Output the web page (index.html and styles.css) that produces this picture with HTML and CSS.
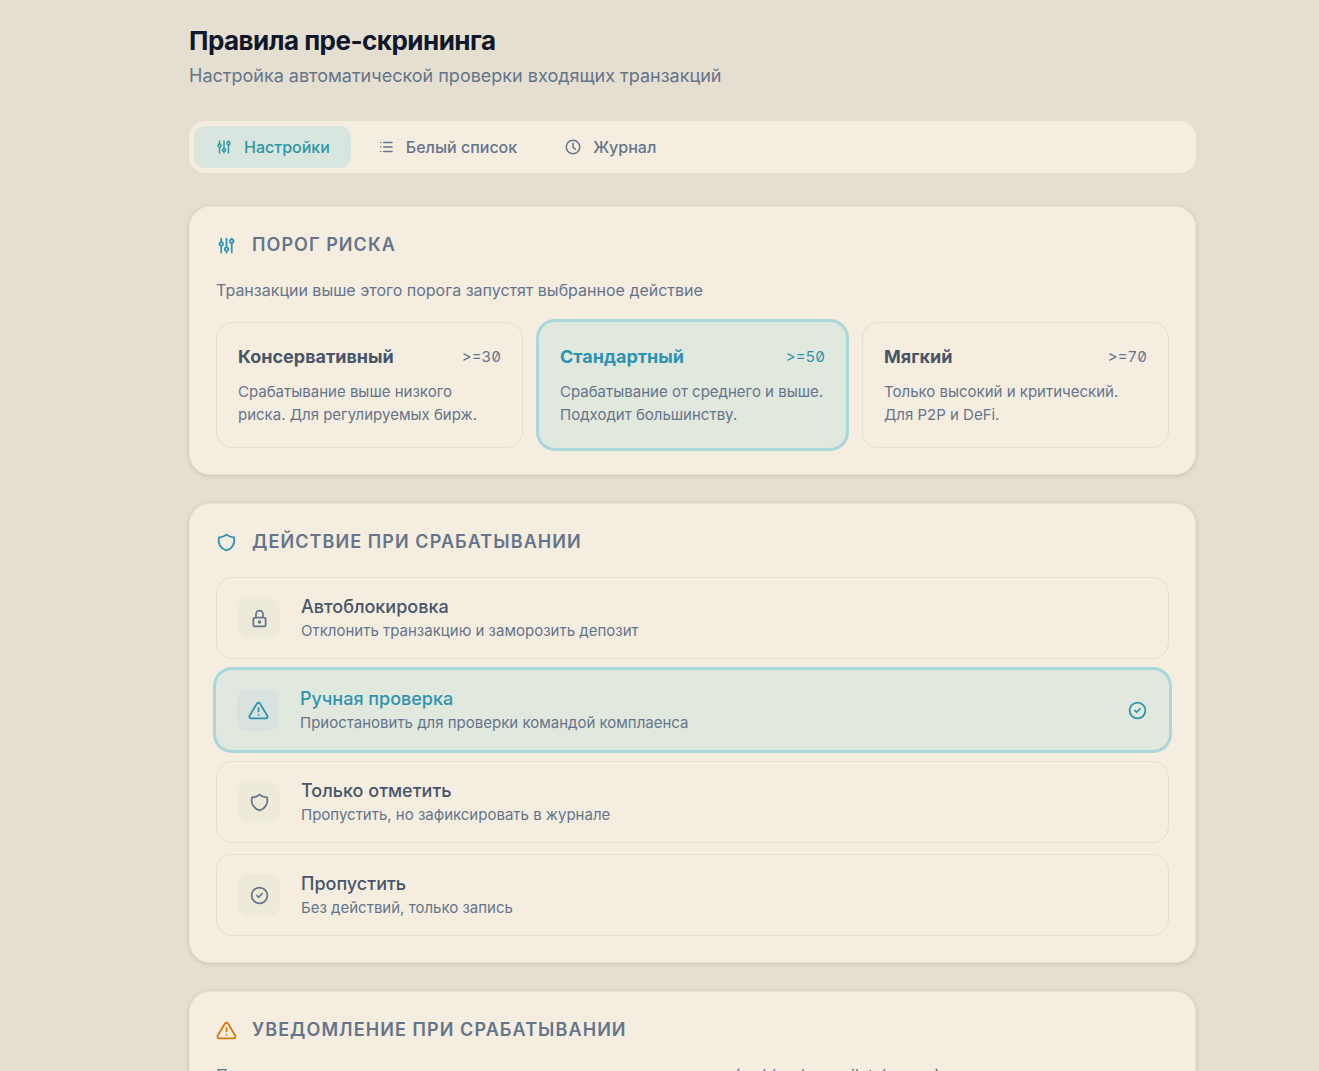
FILE: index.html
```html
<!DOCTYPE html>
<html lang="ru">
<head>
    <meta charset="UTF-8">
    <meta name="viewport" content="width=device-width, initial-scale=1.0">
    <title>Правила пре-скрининга</title>
    <link rel="stylesheet" href="styles.css">
</head>
<body>
    <svg class="sprite" aria-hidden="true">
        <symbol id="i-sliders" viewBox="0 0 24 24">
            <path d="M4 10a2 2 0 1 0 4 0a2 2 0 0 0 -4 0M6 4v4M6 12v8M10 16a2 2 0 1 0 4 0a2 2 0 0 0 -4 0M12 4v10M12 18v2M16 7a2 2 0 1 0 4 0a2 2 0 0 0 -4 0M18 4v1M18 9v11"/>
        </symbol>
        <symbol id="i-list" viewBox="0 0 24 24">
            <path d="M9 6h11M9 12h11M9 18h11M5 6v.01M5 12v.01M5 18v.01"/>
        </symbol>
        <symbol id="i-clock" viewBox="0 0 24 24">
            <path d="M3 12a9 9 0 1 0 18 0a9 9 0 0 0 -18 0M12 7v5l3 3"/>
        </symbol>
        <symbol id="i-shield" viewBox="0 0 24 24">
            <path d="M12 3a12 12 0 0 0 8.5 3a12 12 0 0 1 -8.5 15a12 12 0 0 1 -8.5 -15a12 12 0 0 0 8.5 -3"/>
        </symbol>
        <symbol id="i-lock" viewBox="0 0 24 24">
            <path d="M5 13a2 2 0 0 1 2 -2h10a2 2 0 0 1 2 2v6a2 2 0 0 1 -2 2h-10a2 2 0 0 1 -2 -2zM11 16a1 1 0 1 0 2 0a1 1 0 0 0 -2 0M8 11v-4a4 4 0 1 1 8 0v4"/>
        </symbol>
        <symbol id="i-alert" viewBox="0 0 24 24">
            <path d="M10.24 3.957l-8.422 14.06a1.989 1.989 0 0 0 1.7 2.983h16.845a1.989 1.989 0 0 0 1.7 -2.983l-8.423 -14.06a1.989 1.989 0 0 0 -3.4 0zM12 9v4M12 17h.01"/>
        </symbol>
        <symbol id="i-check" viewBox="0 0 24 24">
            <path d="M3 12a9 9 0 1 0 18 0a9 9 0 0 0 -18 0M9 12l2 2l4 -4"/>
        </symbol>
    </svg>

    <main class="page">
        <header class="page-header">
            <h1>Правила пре-скрининга</h1>
            <p>Настройка автоматической проверки входящих транзакций</p>
        </header>

        <nav class="tabs">
            <button type="button" class="tab active"><svg class="icon icon-sm"><use href="#i-sliders"/></svg>Настройки</button>
            <button type="button" class="tab"><svg class="icon icon-sm"><use href="#i-list"/></svg>Белый список</button>
            <button type="button" class="tab"><svg class="icon icon-sm"><use href="#i-clock"/></svg>Журнал</button>
        </nav>

        <section class="card">
            <h2><svg class="icon accent"><use href="#i-sliders"/></svg>Порог риска</h2>
            <p class="hint">Транзакции выше этого порога запустят выбранное действие</p>
            <div class="levels">
                <label class="option level">
                    <input type="radio" name="level" value="30">
                    <span class="level-head"><span class="level-name">Консервативный</span><span class="level-value">&gt;=30</span></span>
                    <span class="note">Срабатывание выше низкого риска. Для регулируемых бирж.</span>
                </label>
                <label class="option level">
                    <input type="radio" name="level" value="50" checked>
                    <span class="level-head"><span class="level-name">Стандартный</span><span class="level-value">&gt;=50</span></span>
                    <span class="note">Срабатывание от среднего и выше. Подходит большинству.</span>
                </label>
                <label class="option level">
                    <input type="radio" name="level" value="70">
                    <span class="level-head"><span class="level-name">Мягкий</span><span class="level-value">&gt;=70</span></span>
                    <span class="note">Только высокий и критический. Для P2P и DeFi.</span>
                </label>
            </div>
        </section>

        <section class="card">
            <h2><svg class="icon accent"><use href="#i-shield"/></svg>Действие при срабатывании</h2>
            <div class="actions">
                <label class="option action">
                    <input type="radio" name="action" value="block">
                    <span class="tile"><svg class="icon"><use href="#i-lock"/></svg></span>
                    <span class="action-text">
                        <span class="action-name">Автоблокировка</span>
                        <span class="note">Отклонить транзакцию и заморозить депозит</span>
                    </span>
                    <svg class="icon mark"><use href="#i-check"/></svg>
                </label>
                <label class="option action">
                    <input type="radio" name="action" value="review" checked>
                    <span class="tile"><svg class="icon"><use href="#i-alert"/></svg></span>
                    <span class="action-text">
                        <span class="action-name">Ручная проверка</span>
                        <span class="note">Приостановить для проверки командой комплаенса</span>
                    </span>
                    <svg class="icon mark"><use href="#i-check"/></svg>
                </label>
                <label class="option action">
                    <input type="radio" name="action" value="flag">
                    <span class="tile"><svg class="icon"><use href="#i-shield"/></svg></span>
                    <span class="action-text">
                        <span class="action-name">Только отметить</span>
                        <span class="note">Пропустить, но зафиксировать в журнале</span>
                    </span>
                    <svg class="icon mark"><use href="#i-check"/></svg>
                </label>
                <label class="option action">
                    <input type="radio" name="action" value="pass">
                    <span class="tile"><svg class="icon"><use href="#i-check"/></svg></span>
                    <span class="action-text">
                        <span class="action-name">Пропустить</span>
                        <span class="note">Без действий, только запись</span>
                    </span>
                    <svg class="icon mark"><use href="#i-check"/></svg>
                </label>
            </div>
        </section>

        <section class="card">
            <h2><svg class="icon warn"><use href="#i-alert"/></svg>Уведомление при срабатывании</h2>
            <p class="hint">Получатели увидят уведомление через все настроенные каналы (webhook, email, telegram)</p>
        </section>
    </main>
</body>
</html>
```

FILE: styles.css
```css
* {
    box-sizing: border-box;
}

body {
    margin: 0;
    padding-left: 66px;
    background-color: #e5dfd1;
    color: #64748b;
    font-family: Inter, "Noto Sans", sans-serif;
    font-size: 16px;
    line-height: 24px;
}

h1, h2, p {
    margin: 0;
}

.sprite {
    display: none;
}

.page {
    max-width: 1007px;
    margin: 0 auto;
    padding: 25px 0 27px;
}

.page-header {
    margin-bottom: 31px;
}

.page-header h1 {
    margin-bottom: 5px;
    font-size: 26px;
    line-height: 32px;
    font-weight: 700;
    letter-spacing: -0.02em;
    color: #0f172a;
}

.page-header p {
    font-size: 18px;
    line-height: 28px;
}

.icon {
    flex: none;
    width: 21px;
    height: 21px;
    fill: none;
    stroke: currentColor;
    stroke-width: 2;
    stroke-linecap: round;
    stroke-linejoin: round;
}

.icon-sm {
    width: 18px;
    height: 18px;
}

.accent {
    color: #2e93b0;
}

.warn {
    color: #d97706;
}

.tabs {
    display: flex;
    gap: 5px;
    margin-bottom: 33px;
    padding: 5px;
    border-radius: 16px;
    background-color: #f5eee0;
}

.tab {
    display: flex;
    align-items: center;
    gap: 11px;
    height: 42px;
    padding: 0 21px;
    border: none;
    border-radius: 11px;
    background: none;
    color: #64748b;
    font-family: inherit;
    font-size: 16px;
    font-weight: 500;
    cursor: pointer;
}

.tab.active {
    background-color: #d9e6df;
    color: #2e96a6;
}

.card {
    margin-bottom: 28px;
    padding: 25px 26px 26px;
    border: 1px solid #e9e4d4;
    border-radius: 21px;
    background-color: #f5eee0;
    box-shadow: 0 1px 4px rgba(90, 120, 60, 0.25);
}

.card h2 {
    display: flex;
    align-items: center;
    gap: 15px;
    font-size: 18px;
    line-height: 26px;
    font-weight: 600;
    letter-spacing: 0.06em;
    text-transform: uppercase;
}

.hint {
    margin-top: 20px;
}

.levels {
    display: grid;
    grid-template-columns: repeat(3, 1fr);
    gap: 16px;
    margin-top: 20px;
}

.option {
    border: 1px solid #e5dfd0;
    border-radius: 16px;
    cursor: pointer;
}

.option input {
    position: absolute;
    opacity: 0;
    pointer-events: none;
}

.option:has(input:checked) {
    border: none;
    background-color: #e1e8dd;
    box-shadow: 0 0 0 3px #a8d7dc;
}

.level {
    padding: 21px;
}

.level:has(input:checked) {
    padding: 22px 21px;
}

.level-head {
    display: flex;
    align-items: center;
    justify-content: space-between;
    margin-bottom: 10px;
    line-height: 26px;
}

.level-name {
    font-size: 18px;
    font-weight: 700;
    color: #475569;
}

.level-value {
    font-size: 15px;
    font-feature-settings: "tnum", "zero";
}

.note {
    display: block;
    font-size: 15px;
    line-height: 23px;
}

.option:has(input:checked) .level-name,
.option:has(input:checked) .level-value,
.option:has(input:checked) .action-name,
.option:has(input:checked) .tile,
.option:has(input:checked) .mark {
    color: #2e93b0;
}

.actions {
    display: flex;
    flex-direction: column;
    gap: 11px;
    margin-top: 22px;
}

.action {
    display: flex;
    align-items: center;
    gap: 21px;
    padding: 16px 21px;
}

.tile {
    display: flex;
    align-items: center;
    justify-content: center;
    width: 42px;
    height: 42px;
    border-radius: 11px;
    background-color: #edead9;
}

.option:has(input:checked) .tile {
    background-color: #d8e3df;
}

.action-text {
    flex: 1;
}

.action-name {
    display: block;
    font-size: 18px;
    line-height: 25px;
    font-weight: 500;
    color: #475569;
}

.mark {
    visibility: hidden;
}

.option:has(input:checked) .mark {
    visibility: visible;
}

@media (max-width: 800px) {
    body {
        padding-left: 0;
    }

    .page {
        padding: 21px;
    }

    .levels {
        grid-template-columns: 1fr;
    }
}
```
